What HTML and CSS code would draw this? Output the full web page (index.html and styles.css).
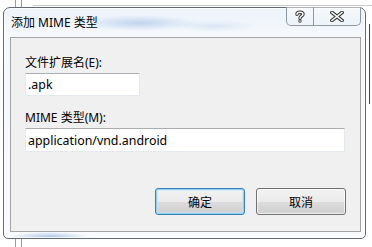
FILE: index.html
```html
<!DOCTYPE html>
<html>
<head>
  <link rel="stylesheet" href="styles.css">
</head>
<body>
  <div class="desktop">
    <div class="window">
      <div class="titlebar">
        <span class="title">添加 MIME 类型</span>
        <div class="caption-buttons">
          <div class="cap help">
            <svg width="10" height="13" viewBox="0 0 10 13">
              <path d="M2 4.2 C2 1.6 8 1.6 8 4.2 C8 6 5 6 5 8.2" fill="none" stroke="#3a3a3a" stroke-width="3.4" stroke-linecap="round"/>
              <circle cx="5" cy="11" r="1.7" fill="#3a3a3a"/>
              <path d="M2 4.2 C2 1.6 8 1.6 8 4.2 C8 6 5 6 5 8.2" fill="none" stroke="#fff" stroke-width="1.4" stroke-linecap="round"/>
              <circle cx="5" cy="11" r="0.8" fill="#fff"/>
            </svg>
          </div>
          <div class="cap close">
            <svg width="14" height="11" viewBox="0 0 14 11">
              <path d="M2 1.5 L12 9.5 M12 1.5 L2 9.5" stroke="#3a3a3a" stroke-width="3.6" stroke-linecap="square"/>
              <path d="M2 1.5 L12 9.5 M12 1.5 L2 9.5" stroke="#fff" stroke-width="1.6" stroke-linecap="square"/>
            </svg>
          </div>
        </div>
      </div>

      <div class="client">
        <label class="field-label">文件扩展名(E):</label>
        <input class="textbox short" type="text" value=".apk">
        <label class="field-label second">MIME 类型(M):</label>
        <input class="textbox long" type="text" value="application/vnd.android">
        <div class="actions">
          <button class="btn default">确定</button>
          <button class="btn">取消</button>
        </div>
      </div>
    </div>
  </div>
</body>
</html>
```

FILE: styles.css
```css
body {
  margin: 0;
  font-family: "Noto Sans", "Noto Sans CJK SC", sans-serif;
  font-size: 12px;
  color: #000;
}
.desktop {
  width: 372px;
  height: 247px;
  overflow: hidden;
  box-sizing: border-box;
  padding: 7px 0 0 3px;
  background:
    linear-gradient(#c8c8c8, #c8c8c8) 33px 5px / 339px 1px no-repeat,
    linear-gradient(#9a9a9a, #9a9a9a) 15px 0 / 1px 247px no-repeat,
    linear-gradient(#9a9a9a, #9a9a9a) 21px 0 / 1px 247px no-repeat,
    linear-gradient(#4a3a4a, #4a3a4a) 369px 24px / 1px 80px no-repeat,
    #fff;
}
.window {
  width: 363px;
  height: 232px;
  box-sizing: border-box;
  border: 1px solid #5f6a74;
  border-radius: 7px 7px 5px 5px;
  padding: 0 4px 6px 6px;
  display: flex;
  flex-direction: column;
  background:
    radial-gradient(ellipse 40px 5px at 45px 229px, rgba(120, 160, 220, 0.6), transparent),
    radial-gradient(ellipse 60px 8px at 135px 15px, rgba(120, 160, 220, 0.4), transparent),
    radial-gradient(ellipse 45px 6px at 210px 18px, rgba(150, 180, 220, 0.25), transparent),
    linear-gradient(#edf3fa, #f6f9fc 30px, #f8fafd);
  box-shadow: inset 0 0 0 1px rgba(255, 255, 255, 0.8);
}
.titlebar {
  height: 29px;
  display: flex;
  justify-content: space-between;
  align-items: flex-start;
  flex-shrink: 0;
}
.title {
  padding: 7px 0 0 1px;
  line-height: 16px;
  color: #000;
}
.caption-buttons {
  display: flex;
  margin-top: -1px;
  height: 19px;
  box-sizing: border-box;
  border: 1px solid #8d98a3;
  border-top: none;
  border-radius: 0 0 5px 5px;
  background: linear-gradient(rgba(255, 255, 255, 0.5), rgba(230, 238, 245, 0.4));
}
.cap {
  display: flex;
  align-items: center;
  justify-content: center;
}
.help {
  width: 26px;
  border-right: 1px solid #8d98a3;
}
.close {
  width: 46px;
}
.client {
  flex: 1;
  background: #f0f0f0;
  border: 1px solid #a3a3a3;
  padding: 17px 14px 0 14px;
  display: flex;
  flex-direction: column;
  align-items: flex-start;
}
.field-label {
  line-height: 16px;
}
.field-label.second {
  margin-top: 14px;
}
.textbox {
  margin: 2px 0 0 0;
  box-sizing: border-box;
  height: 23px;
  padding: 0 2px;
  border: 1px solid #e3e9ef;
  border-top-color: #abadb3;
  background: #fff;
  font: inherit;
  font-size: 12.4px;
  color: #000;
  outline: none;
}
.textbox.short {
  width: 115px;
}
.textbox.long {
  width: 320px;
  height: 24px;
}
.actions {
  align-self: stretch;
  display: flex;
  justify-content: flex-end;
  gap: 11px;
  margin-top: 36px;
}
.btn {
  width: 90px;
  height: 27px;
  border: 1px solid #707070;
  border-radius: 3px;
  font: inherit;
  color: #000;
  background: linear-gradient(#f2f2f2, #ebebeb 50%, #dddddd 50%, #cfcfcf);
  box-shadow: inset 0 0 0 1px rgba(255, 255, 255, 0.7);
  padding: 0;
}
.btn.default {
  border-color: #3c7fb1;
  box-shadow: inset 0 0 0 1px #8fd3f7, inset 0 0 0 2px rgba(190, 230, 250, 0.5);
}
```
